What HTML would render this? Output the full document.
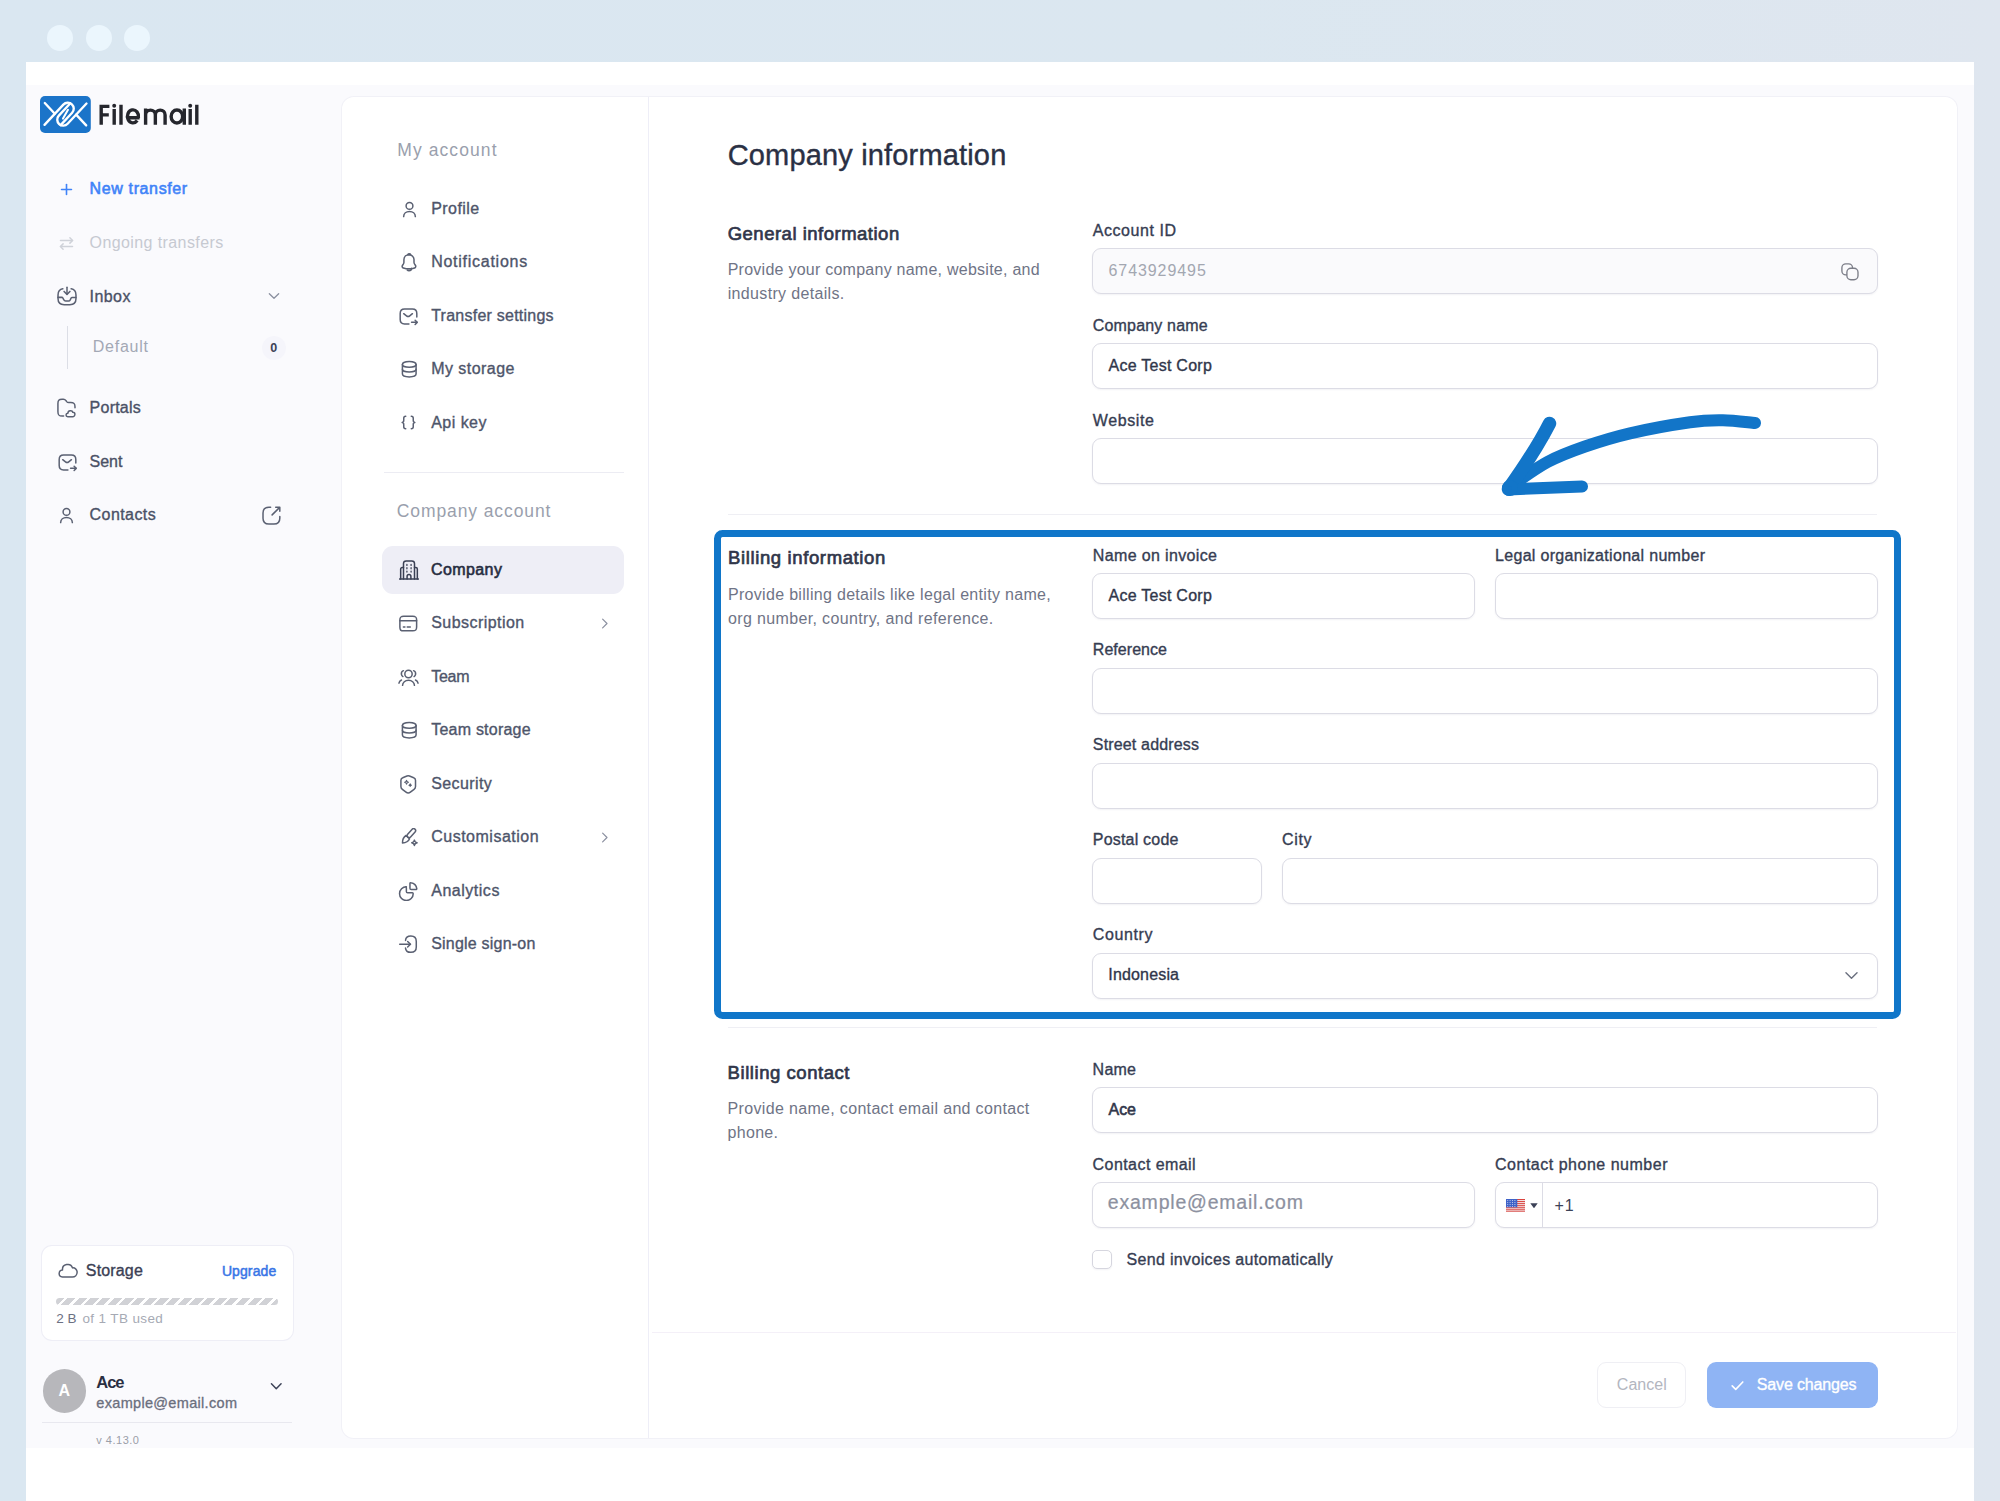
<!DOCTYPE html><html lang="en"><head><meta charset="utf-8"><title>Company information</title><style>

html,body{margin:0;padding:0}
body{width:2000px;height:1501px;background:linear-gradient(90deg,#dae7f1 0%,#dbe7f0 60%,#dfe6ef 100%);position:relative;overflow:hidden;font-family:"Liberation Sans",sans-serif;-webkit-font-smoothing:antialiased}
.b{position:absolute;display:block}
.t{position:absolute;white-space:pre;display:block}

</style></head><body>
<div class="b" style="left:25.5px;top:62.3px;width:1948.0px;height:1438.7px;background:#fff;"></div>
<div class="b" style="left:25.5px;top:84.5px;width:1948.0px;height:1363.5px;background:#fafafd;"></div>
<div class="b" style="left:47px;top:25px;width:26px;height:26px;background:#ebf6fd;border-radius:50%;"></div>
<div class="b" style="left:85.5px;top:25px;width:26.0px;height:26px;background:#ebf6fd;border-radius:50%;"></div>
<div class="b" style="left:124px;top:25px;width:26px;height:26px;background:#ebf6fd;border-radius:50%;"></div>
<div class="b" style="left:342px;top:97px;width:1614.5px;height:1340.8px;background:#fff;border-radius:12px;box-shadow:0 0 0 1px #f1f1f7;"></div>
<div class="b" style="left:648px;top:97px;width:1.3999999999999773px;height:1340.8px;background:#eeeef7;"></div>
<div class="b" style="left:66.8px;top:325.5px;width:1.5px;height:43.5px;background:#dcdee6;"></div>
<div class="b" style="left:262px;top:336px;width:24px;height:24px;background:#f5f5fb;border-radius:50%;"></div>
<div class="b" style="left:42px;top:1246.2px;width:250.60000000000002px;height:94.29999999999995px;background:#fff;border-radius:10px;box-shadow:0 0 0 1px #eeeef6;"></div>
<div class="b" style="left:56px;top:1297.5px;width:221.5px;height:7.0px;border-radius:4px;background:repeating-linear-gradient(135deg,#d1d2d6 0 5.800px,#fff 5.800px 8.240px);"></div>
<div class="b" style="left:42.6px;top:1369.4px;width:43.800000000000004px;height:43.799999999999955px;background:#b7b7bb;border-radius:50%;"></div>
<div class="b" style="left:42px;top:1422px;width:250px;height:1.400000000000091px;background:#e8e8ef;"></div>
<div class="b" style="left:384px;top:472px;width:240px;height:1.1999999999999886px;background:#ececf3;"></div>
<div class="b" style="left:382.4px;top:546px;width:241.80000000000007px;height:48px;background:#eeeef6;border-radius:11px;"></div>
<div class="b" style="left:728px;top:513.5px;width:1149px;height:1.2000000000000455px;background:#efeff4;"></div>
<div class="b" style="left:728px;top:1027px;width:1149px;height:1.2000000000000455px;background:#efeff4;"></div>
<div class="b" style="left:652px;top:1331.6px;width:1304px;height:1.400000000000091px;background:#f4f0f8;"></div>
<div class="b" style="left:1092.3px;top:248.2px;width:785.9000000000001px;height:46.0px;background:#fff;border:1px solid #dcdce5;border-radius:9px;box-shadow:0 1px 2px rgba(40,40,80,.06);box-sizing:border-box;background:#fafafc;"></div>
<div class="b" style="left:1092.3px;top:343px;width:785.9000000000001px;height:46px;background:#fff;border:1px solid #dcdce5;border-radius:9px;box-shadow:0 1px 2px rgba(40,40,80,.06);box-sizing:border-box;"></div>
<div class="b" style="left:1092.3px;top:438px;width:785.9000000000001px;height:46px;background:#fff;border:1px solid #dcdce5;border-radius:9px;box-shadow:0 1px 2px rgba(40,40,80,.06);box-sizing:border-box;"></div>
<div class="b" style="left:1092.3px;top:573px;width:382.5px;height:46px;background:#fff;border:1px solid #dcdce5;border-radius:9px;box-shadow:0 1px 2px rgba(40,40,80,.06);box-sizing:border-box;"></div>
<div class="b" style="left:1494.8px;top:573px;width:383.4000000000001px;height:46px;background:#fff;border:1px solid #dcdce5;border-radius:9px;box-shadow:0 1px 2px rgba(40,40,80,.06);box-sizing:border-box;"></div>
<div class="b" style="left:1092.3px;top:668px;width:785.9000000000001px;height:46px;background:#fff;border:1px solid #dcdce5;border-radius:9px;box-shadow:0 1px 2px rgba(40,40,80,.06);box-sizing:border-box;"></div>
<div class="b" style="left:1092.3px;top:762.8px;width:785.9000000000001px;height:46.0px;background:#fff;border:1px solid #dcdce5;border-radius:9px;box-shadow:0 1px 2px rgba(40,40,80,.06);box-sizing:border-box;"></div>
<div class="b" style="left:1092.3px;top:857.8px;width:169.70000000000005px;height:46.0px;background:#fff;border:1px solid #dcdce5;border-radius:9px;box-shadow:0 1px 2px rgba(40,40,80,.06);box-sizing:border-box;"></div>
<div class="b" style="left:1281.8px;top:857.8px;width:596.4000000000001px;height:46.0px;background:#fff;border:1px solid #dcdce5;border-radius:9px;box-shadow:0 1px 2px rgba(40,40,80,.06);box-sizing:border-box;"></div>
<div class="b" style="left:1092.3px;top:952.6px;width:785.9000000000001px;height:46.0px;background:#fff;border:1px solid #dcdce5;border-radius:9px;box-shadow:0 1px 2px rgba(40,40,80,.06);box-sizing:border-box;"></div>
<div class="b" style="left:1092.3px;top:1087.4px;width:785.9000000000001px;height:45.799999999999955px;background:#fff;border:1px solid #dcdce5;border-radius:9px;box-shadow:0 1px 2px rgba(40,40,80,.06);box-sizing:border-box;"></div>
<div class="b" style="left:1092.3px;top:1182px;width:382.5px;height:46px;background:#fff;border:1px solid #dcdce5;border-radius:9px;box-shadow:0 1px 2px rgba(40,40,80,.06);box-sizing:border-box;"></div>
<div class="b" style="left:1494.8px;top:1182px;width:383.4000000000001px;height:46px;background:#fff;border:1px solid #dcdce5;border-radius:9px;box-shadow:0 1px 2px rgba(40,40,80,.06);box-sizing:border-box;"></div>
<div class="b" style="left:1542px;top:1183px;width:1.2000000000000455px;height:44px;background:#dcdce5;"></div>
<div class="b" style="left:1092.3px;top:1250px;width:19.299999999999955px;height:19.200000000000045px;background:#fff;border:1px solid #dcdce5;border-radius:9px;box-shadow:0 1px 2px rgba(40,40,80,.06);box-sizing:border-box;border-radius:5px;border-color:#d6d6df;"></div>
<div class="b" style="left:1596.6px;top:1362.4px;width:89.60000000000014px;height:45.19999999999982px;background:#fff;border:1px solid #efeff4;border-radius:9px;box-sizing:border-box;"></div>
<div class="b" style="left:1706.6px;top:1362.4px;width:171.0px;height:45.19999999999982px;background:#8fb4f4;border-radius:9px;"></div>
<div class="b" style="left:714px;top:530px;width:1187px;height:489px;border:7px solid #1076c9;border-radius:8.500px;box-sizing:border-box;"></div>
<svg class="b" style="left:40.1px;top:96px" width="50.8" height="36.9" viewBox="0 0 50.8 36.9"><rect width="50.8" height="36.9" rx="5" fill="#1b74c9"/><g stroke="#fff" stroke-width="2.35" stroke-linecap="round" stroke-linejoin="round" fill="none"><path d="M4.800 7L14.830 17.750"/><path d="M46.200 29.400L36.170 18.650"/><path d="M4.500 28.840L23.370 8.610A6 6 0 0 1 32.150 16.790L20.660 29.110"/><path d="M46.500 7.560L27.630 27.790A6 6 0 0 1 18.850 19.610L30.340 7.290"/><path d="M28 13.800L23 22.600" stroke-width="2"/></g></svg>
<svg class="b" role="img" aria-label="Filemail" style="left:0;top:0" width="220" height="140" viewBox="0 0 220 140" fill="none" stroke="#25262d" stroke-width="3.4"><path d="M101.2,124.7V104.7M99.5,106.4H109.4M99.5,114.9H108.8M114.2,124.7V109.10000000000001M121,124.7V104.7M128.3,117.7H139.6M138.4,117.7A5.55,6.5 0 1 0 137.22,120.55M145.6,124.7V108.4M145.6,114.97500000000001A4.875,4.875 0 0 1 155.35,114.97500000000001V124.7M155.35,114.97500000000001A4.875,4.875 0 0 1 165.1,114.97500000000001V124.7M184.3,124.7V108.4M190.2,124.7V109.10000000000001M196.8,124.7V104.7"/><ellipse cx="176.900" cy="116.550" rx="5.750" ry="6.500"/><circle cx="114.200" cy="105.700" r="1.950" fill="#25262d" stroke="none"/><circle cx="190.200" cy="105.700" r="1.950" fill="#25262d" stroke="none"/></svg>
<svg class="b" style="left:58.1px;top:180.9px" width="17" height="17" viewBox="0 0 24 24" fill="none" stroke="#3f83f8" stroke-width="2.26" stroke-linecap="round" stroke-linejoin="round" ><path d="M5 12h14"/><path d="M12 5v14"/></svg>
<svg class="b" style="left:58.3px;top:234.5px" width="17" height="17" viewBox="0 0 24 24" fill="none" stroke="#cfd2d9" stroke-width="2.12" stroke-linecap="round" stroke-linejoin="round" ><path d="M20.500 7.800H3.500"/><path d="M16.800 4l3.700 3.800-3.700 3.700"/><path d="M3.500 16.200h17"/><path d="M7.200 12.500l-3.700 3.700 3.700 3.800"/></svg>
<svg class="b" style="left:56.0px;top:285.2px" width="22" height="22" viewBox="0 0 24 24" fill="none" stroke="#5a6072" stroke-width="1.64" stroke-linecap="round" stroke-linejoin="round" ><path d="M12 2.500v7.200"/><path d="M8.800 7l3.200 3.200L15.200 7"/><path d="M2.200 13.500h4.300c.4 0 .7.200.9.500l1 2c.6 1.200 1.500 1.500 2.100 1.500h3.100c.8 0 1.600-.5 1.900-1.200l1.100-2.200c.2-.3.500-.5.900-.5h4.200"/><path d="M7.500 4.200C4 4.700 2.200 6.800 2.200 11v3.800c0 4.800 1.900 6.700 6.700 6.700h6.200c4.800 0 6.700-1.900 6.700-6.700V11c0-4.200-1.800-6.300-5.300-6.800"/></svg>
<svg class="b" style="left:266.0px;top:288.0px" width="16" height="16" viewBox="0 0 24 24" fill="none" stroke="#8b90a0" stroke-width="1.95" stroke-linecap="round" stroke-linejoin="round" ><path d="M5 8.500l7 7 7-7"/></svg>
<svg class="b" style="left:56.3px;top:397.9px" width="21" height="21" viewBox="0 0 24 24" fill="none" stroke="#5a6072" stroke-width="1.71" stroke-linecap="round" stroke-linejoin="round" ><path d="M21.700 11.200V10c0-3.800-1-4.800-4.800-4.800h-2.400c-1 0-1.700-.3-2.300-1.100l-.7-1c-.7-.9-1.200-1.600-3.100-1.600H7c-3.800 0-4.800 1-4.800 4.800v9.500c0 3.800 1 4.800 4.800 4.800h1.700"/><path d="M13.500 21.300c-2.700-.2-2.700-3.800 0-4h.1c0-3.200 5-3.700 5.600-1 1.100-.1 2.300.7 2.400 2.100.1 1.600-1.200 2.900-2.700 2.900h-5.400z"/></svg>
<svg class="b" style="left:56.5px;top:451.5px" width="21" height="21" viewBox="0 0 24 24" fill="none" stroke="#5a6072" stroke-width="1.71" stroke-linecap="round" stroke-linejoin="round" ><path d="M21.500 12.500V8.500c0-3.500-2-5-5-5h-9c-3 0-5 1.500-5 5v7c0 3.500 2 5 5 5h5"/><path d="M16.500 8.800l-3.100 2.500c-1 .8-2.700.8-3.700 0L6.500 8.800"/><path d="M15.500 18.700h6.300"/><path d="M19.600 16.300l2.300 2.400-2.300 2.400"/></svg>
<svg class="b" style="left:57.3px;top:506.3px" width="19" height="19" viewBox="0 0 24 24" fill="none" stroke="#5a6072" stroke-width="1.89" stroke-linecap="round" stroke-linejoin="round" ><circle cx="12" cy="7.5" r="4.3"/><path d="M4.6 21c0-3.9 3.3-6.4 7.4-6.4s7.4 2.5 7.4 6.4"/></svg>
<svg class="b" style="left:260.7px;top:505.1px" width="21" height="21" viewBox="0 0 24 24" fill="none" stroke="#5a6072" stroke-width="1.71" stroke-linecap="round" stroke-linejoin="round" ><path d="M12.700 11.300l8-8"/><path d="M21.500 7.200V2.500h-4.700"/><path d="M11 2.500H9c-4.800 0-6.700 1.900-6.700 6.700v5.800c0 4.800 1.900 6.700 6.700 6.700h5.800c4.800 0 6.700-1.900 6.700-6.700v-2"/></svg>
<svg class="b" style="left:57.3px;top:1260.3px" width="21" height="21" viewBox="0 0 24 24" fill="none" stroke="#5a6072" stroke-width="1.71" stroke-linecap="round" stroke-linejoin="round" ><path d="M6.200 19.500c-5-.4-5-7.600 0-8h.1C5.500 4.700 15.700 2.500 17.700 9c2.600-.4 5.300 1.600 5.300 5 0 3-2.400 5.500-5.400 5.500H6.200z"/></svg>
<svg class="b" style="left:267.55px;top:1377.55px" width="16.5" height="16.5" viewBox="0 0 24 24" fill="none" stroke="#3c4257" stroke-width="2.18" stroke-linecap="round" stroke-linejoin="round" ><path d="M5 8.500l7 7 7-7"/></svg>
<svg class="b" style="left:399.5px;top:199.5px" width="19" height="19" viewBox="0 0 24 24" fill="none" stroke="#5a6072" stroke-width="1.89" stroke-linecap="round" stroke-linejoin="round" ><circle cx="12" cy="7.5" r="4.3"/><path d="M4.6 21c0-3.9 3.3-6.4 7.4-6.4s7.4 2.5 7.4 6.4"/></svg>
<svg class="b" style="left:398.6px;top:252.4px" width="20" height="20" viewBox="0 0 24 24" fill="none" stroke="#5a6072" stroke-width="1.8" stroke-linecap="round" stroke-linejoin="round" ><path d="M12 3.2c-3.4 0-6.1 2.7-6.1 6.1v2.9c0 .6-.3 1.6-.6 2.1l-1.200 1.900c-.7 1.200-.2 2.500 1.100 2.900 4.400 1.500 9.100 1.500 13.500 0 1.200-.4 1.800-1.800 1.100-2.900l-1.200-1.900c-.3-.5-.6-1.500-.6-2.100V9.300c.1-3.300-2.700-6.100-6-6.100z"/><path d="M13.500 3.400a6 6 0 0 0-3 0c.3-.7 1-1.200 1.800-1.200s1.500.5 1.800 1.200z"/><path d="M15 19.500c0 1.600-1.400 3-3 3-.8 0-1.600-.3-2.100-.9"/></svg>
<svg class="b" style="left:398.3px;top:305.7px" width="21" height="21" viewBox="0 0 24 24" fill="none" stroke="#5a6072" stroke-width="1.71" stroke-linecap="round" stroke-linejoin="round" ><path d="M21.500 12.500V8.500c0-3.500-2-5-5-5h-9c-3 0-5 1.500-5 5v7c0 3.500 2 5 5 5h5"/><path d="M16.500 8.800l-3.100 2.500c-1 .8-2.700.8-3.700 0L6.500 8.800"/><path d="M15.500 18.700h6.300"/><path d="M19.600 16.300l2.300 2.400-2.300 2.400"/></svg>
<svg class="b" style="left:398.55px;top:359.15px" width="20.5" height="20.5" viewBox="0 0 24 24" fill="none" stroke="#5a6072" stroke-width="1.76" stroke-linecap="round" stroke-linejoin="round" ><ellipse cx="12" cy="6.3" rx="8" ry="3.300"/><path d="M4 6.300v11.400c0 1.800 3.600 3.300 8 3.300s8-1.500 8-3.300V6.300"/><path d="M4 12c0 1.800 3.600 3.300 8 3.300s8-1.500 8-3.300"/></svg>
<svg class="b" style="left:399.3px;top:413.3px" width="19" height="19" viewBox="0 0 24 24" fill="none" stroke="#5a6072" stroke-width="1.89" stroke-linecap="round" stroke-linejoin="round" ><path d="M8.500 4C6.500 4 6 5 6 6.500v2.800C6 10.800 5.300 12 4 12c1.300 0 2 1.200 2 2.700v2.800C6 19 6.500 20 8.500 20"/><path d="M15.500 4c2 0 2.500 1 2.500 2.500v2.800c0 1.500.7 2.700 2 2.700-1.300 0-2 1.200-2 2.700v2.800c0 1.500-.5 2.500-2.500 2.500"/></svg>
<svg class="b" style="left:398.6px;top:559.8px" width="20" height="20" viewBox="0 0 24 24" fill="none" stroke="#3a4054" stroke-width="1.8" stroke-linecap="round" stroke-linejoin="round" ><path d="M0.800 22.800h22.400"/><path d="M5.400 22.800V4.300c0-1.900 1.300-3.200 3.200-3.200h6.800c1.900 0 3.200 1.300 3.200 3.200v18.500"/><path d="M5.400 9H3.900c-1.100 0-1.900.8-1.900 1.900v11.900M18.600 9h1.500c1.100 0 1.900.8 1.900 1.900v11.900"/><path d="M9.700 22.800v-3.100c0-1.300 1-2.300 2.300-2.300s2.300 1 2.300 2.300v3.100"/><path d="M9.500 5.200v1.300M9.500 9.200v1.300M9.500 13.200v1.300M14.500 5.200v1.300M14.500 9.200v1.300M14.500 13.200v1.300" stroke-width="1.500"/></svg>
<svg class="b" style="left:398.35px;top:613.35px" width="20.5" height="20.5" viewBox="0 0 24 24" fill="none" stroke="#5a6072" stroke-width="1.76" stroke-linecap="round" stroke-linejoin="round" ><path d="M2.200 9h19.600"/><path d="M6.300 16.500h1.800M10.800 16.500h3.600"/><path d="M6.700 3.800h10.600c3.600 0 4.500.9 4.500 4.400v8.300c0 3.500-.9 4.400-4.500 4.400H6.700c-3.600 0-4.500-.9-4.500-4.400V8.200c0-3.500.9-4.400 4.500-4.400z"/></svg>
<svg class="b" style="left:596.9px;top:615.7px" width="15" height="15" viewBox="0 0 24 24" fill="none" stroke="#8b90a0" stroke-width="1.92" stroke-linecap="round" stroke-linejoin="round" ><path d="M9 5l7 7-7 7"/></svg>
<svg class="b" style="left:398.1px;top:666.5px" width="21" height="21" viewBox="0 0 24 24" fill="none" stroke="#5a6072" stroke-width="1.71" stroke-linecap="round" stroke-linejoin="round" ><circle cx="12" cy="8" r="4.200"/><path d="M5.200 21c0-3.300 3-5.800 6.800-5.800s6.800 2.500 6.800 5.800"/><path d="M17.800 4.200c1.600.7 2.600 2.300 2.300 4.100-.2 1.100-.8 2-1.700 2.600"/><path d="M20 14.800c1.500.7 2.600 2 2.900 3.700"/><path d="M6.200 4.200C4.600 4.900 3.600 6.500 3.900 8.300c.2 1.100.8 2 1.700 2.600"/><path d="M4 14.800c-1.500.7-2.600 2-2.900 3.700"/></svg>
<svg class="b" style="left:398.55px;top:720.35px" width="20.5" height="20.5" viewBox="0 0 24 24" fill="none" stroke="#5a6072" stroke-width="1.76" stroke-linecap="round" stroke-linejoin="round" ><ellipse cx="12" cy="6.3" rx="8" ry="3.300"/><path d="M4 6.300v11.400c0 1.800 3.600 3.300 8 3.300s8-1.500 8-3.300V6.300"/><path d="M4 12c0 1.800 3.600 3.300 8 3.300s8-1.500 8-3.300"/></svg>
<svg class="b" style="left:398.35px;top:773.75px" width="20.5" height="20.5" viewBox="0 0 24 24" fill="none" stroke="#5a6072" stroke-width="1.76" stroke-linecap="round" stroke-linejoin="round" ><path d="M10.500 2.400L5.500 4.300C4.300 4.700 3.400 6.100 3.400 7.300v7.400c0 1.200.8 2.700 1.700 3.400l4.300 3.200c1.400 1.100 3.700 1.100 5.100 0l4.300-3.200c.9-.7 1.700-2.200 1.700-3.400V7.300c0-1.200-.9-2.600-2.100-3l-5-1.900c-.8-.3-2.100-.3-2.900 0z"/><path d="M10 7.300c.2 1.400.9 2.100 2.300 2.300-1.400.2-2.100.9-2.300 2.300-.2-1.400-.9-2.100-2.300-2.300 1.400-.2 2.100-.9 2.300-2.300z" stroke-width="1.300"/><path d="M14.300 11.600c.1.900.6 1.400 1.500 1.500-.9.100-1.400.6-1.500 1.500-.1-.9-.6-1.400-1.500-1.500.9-.1 1.400-.6 1.500-1.500z" stroke-width="1.300"/></svg>
<svg class="b" style="left:398.35px;top:827.55px" width="20.5" height="20.5" viewBox="0 0 24 24" fill="none" stroke="#5a6072" stroke-width="1.76" stroke-linecap="round" stroke-linejoin="round" ><g transform="translate(-1.200 -0.600) rotate(42 12 12)"><rect x="9.700" y="-1.500" width="4.600" height="12.500" rx="2.300"/><path d="M9.200 11h5.600c.9 2.800-.2 6.500-2.800 9.300-2.600-2.800-3.700-6.500-2.800-9.300z"/></g><path d="M19.200 14.200c.3 1.800 1.300 2.800 3.100 3.100-1.800.3-2.800 1.300-3.100 3.100-.3-1.800-1.300-2.800-3.100-3.100 1.800-.3 2.800-1.300 3.100-3.100z"/></svg>
<svg class="b" style="left:596.9px;top:829.7px" width="15" height="15" viewBox="0 0 24 24" fill="none" stroke="#8b90a0" stroke-width="1.92" stroke-linecap="round" stroke-linejoin="round" ><path d="M9 5l7 7-7 7"/></svg>
<svg class="b" style="left:398.35px;top:880.75px" width="20.5" height="20.5" viewBox="0 0 24 24" fill="none" stroke="#5a6072" stroke-width="1.76" stroke-linecap="round" stroke-linejoin="round" ><path d="M10.300 6.200a8 8 0 1 0 8 8c0-.6-.4-1-1-1h-5.500c-.8 0-1.500-.7-1.500-1.500V7.200c0-.6-.4-1-1-1z" transform="translate(-.5 .6)"/><path d="M14 2.800c0-.6.500-1.100 1.100-1 3.600.5 6.400 3.300 6.900 6.900.1.600-.4 1.100-1 1.100h-5.500c-.8 0-1.500-.7-1.500-1.500V2.800z" transform="translate(0 .2)"/></svg>
<svg class="b" style="left:398.35px;top:934.35px" width="20.5" height="20.5" viewBox="0 0 24 24" fill="none" stroke="#5a6072" stroke-width="1.76" stroke-linecap="round" stroke-linejoin="round" ><path d="M2 12h12.500"/><path d="M11.300 8.700l3.300 3.300-3.300 3.300"/><path d="M8.800 7.500c.3-3.600 2.200-5.100 6.200-5.100h.1c4.500 0 6.300 1.800 6.300 6.300v6.500c0 4.500-1.800 6.300-6.300 6.300H15c-4 0-5.900-1.400-6.200-5"/></svg>
<svg class="b" style="left:1840px;top:261.5px" width="20" height="20" viewBox="0 0 20 20" fill="none" stroke="#7c7e88" stroke-width="1.35"><rect x="1.900" y="1.900" width="10.600" height="11" rx="3.900"/><rect x="6.900" y="6.200" width="11.100" height="11.500" rx="4" fill="#fafafc"/></svg>
<svg class="b" style="left:1841.7px;top:966.1px" width="19" height="19" viewBox="0 0 24 24" fill="none" stroke="#6a6f7e" stroke-width="1.77" stroke-linecap="round" stroke-linejoin="round" ><path d="M5 8.500l7 7 7-7"/></svg>
<svg class="b" style="left:1728.7px;top:1376.5px" width="17" height="17" viewBox="0 0 24 24" fill="none" stroke="#ffffff" stroke-width="2.26" stroke-linecap="round" stroke-linejoin="round" ><path d="M4.500 12.500l5 5L19.500 7"/></svg>
<svg class="b" style="left:1505.8px;top:1198.6px" width="19.4" height="13.4" viewBox="0 0 19.4 13.4"><rect width="19.4" height="13.4" fill="#f3e7e7"/><rect y="0.00" width="19.4" height="1.03" fill="#d9433f"/><rect y="2.06" width="19.4" height="1.03" fill="#d9433f"/><rect y="4.12" width="19.4" height="1.03" fill="#d9433f"/><rect y="6.18" width="19.4" height="1.03" fill="#d9433f"/><rect y="8.24" width="19.4" height="1.03" fill="#d9433f"/><rect y="10.30" width="19.4" height="1.03" fill="#d9433f"/><rect y="12.36" width="19.4" height="1.03" fill="#d9433f"/><rect width="11.300" height="8.300" fill="#3f63c8"/><g fill="#b9c4ea"><rect x="1.2" y="1.0" width="1" height="1"/><rect x="3.6" y="1.0" width="1" height="1"/><rect x="6.0" y="1.0" width="1" height="1"/><rect x="8.4" y="1.0" width="1" height="1"/><rect x="1.2" y="3.0" width="1" height="1"/><rect x="3.6" y="3.0" width="1" height="1"/><rect x="6.0" y="3.0" width="1" height="1"/><rect x="8.4" y="3.0" width="1" height="1"/><rect x="1.2" y="5.0" width="1" height="1"/><rect x="3.6" y="5.0" width="1" height="1"/><rect x="6.0" y="5.0" width="1" height="1"/><rect x="8.4" y="5.0" width="1" height="1"/><rect x="1.2" y="7.0" width="1" height="1"/><rect x="3.6" y="7.0" width="1" height="1"/><rect x="6.0" y="7.0" width="1" height="1"/><rect x="8.4" y="7.0" width="1" height="1"/></g></svg><svg class="b" style="left:1529.6px;top:1202.6px" width="8" height="5.600" viewBox="0 0 8 5.600"><path d="M0.300 0.300h7.400L4 5.300z" fill="#3c4257"/></svg>
<span class="t" style="left:89.6px;top:178.98px;font-size:16px;line-height:19.2px;font-weight:400;color:#3f83f8;-webkit-text-stroke:0.58px #3f83f8;letter-spacing:0.627px">New transfer</span>
<span class="t" style="left:89.6px;top:232.58px;font-size:16px;line-height:19.2px;font-weight:400;color:#c6c9d1;letter-spacing:0.401px">Ongoing transfers</span>
<span class="t" style="left:89.6px;top:286.58px;font-size:16px;line-height:19.2px;font-weight:400;color:#4a5166;-webkit-text-stroke:0.35px #4a5166;letter-spacing:0.415px">Inbox</span>
<span class="t" style="left:92.8px;top:336.98px;font-size:16px;line-height:19.2px;font-weight:400;color:#a3a8b5;letter-spacing:0.749px">Default</span>
<span class="t" style="left:270.2px;top:340.84px;font-size:12.5px;line-height:15.0px;font-weight:700;color:#3c4257;letter-spacing:0.847px">0</span>
<span class="t" style="left:89.6px;top:397.78px;font-size:16px;line-height:19.2px;font-weight:400;color:#4a5166;-webkit-text-stroke:0.35px #4a5166;letter-spacing:0.234px">Portals</span>
<span class="t" style="left:89.6px;top:451.98px;font-size:16px;line-height:19.2px;font-weight:400;color:#4a5166;-webkit-text-stroke:0.35px #4a5166;letter-spacing:-0.041px">Sent</span>
<span class="t" style="left:89.6px;top:505.18px;font-size:16px;line-height:19.2px;font-weight:400;color:#4a5166;-webkit-text-stroke:0.35px #4a5166;letter-spacing:0.423px">Contacts</span>
<span class="t" style="left:85.8px;top:1261.08px;font-size:16px;line-height:19.2px;font-weight:400;color:#3a4054;-webkit-text-stroke:0.35px #3a4054;letter-spacing:0.159px">Storage</span>
<span class="t" style="left:221.9px;top:1262.76px;font-size:14px;line-height:16.8px;font-weight:400;color:#3875e6;-webkit-text-stroke:0.5px #3875e6;letter-spacing:0.099px">Upgrade</span>
<span class="t" style="left:56.3px;top:1311.46px;font-size:13.5px;line-height:16.2px;font-weight:400;color:#6b7082;letter-spacing:-0.033px">2 B</span>
<span class="t" style="left:82.5px;top:1311.46px;font-size:13.5px;line-height:16.2px;font-weight:400;color:#a6aab4;letter-spacing:0.363px">of 1 TB used</span>
<span class="t" style="left:58.6px;top:1381.18px;font-size:16px;line-height:19.2px;font-weight:700;color:#ffffff;letter-spacing:-0.163px">A</span>
<span class="t" style="left:96.3px;top:1373.29px;font-size:16.5px;line-height:19.8px;font-weight:700;color:#2a2f42;letter-spacing:-1.041px">Ace</span>
<span class="t" style="left:96.3px;top:1394.87px;font-size:14.5px;line-height:17.4px;font-weight:400;color:#6b6f7d;-webkit-text-stroke:0.32px #6b6f7d;letter-spacing:0.318px">example@email.com</span>
<span class="t" style="left:96.3px;top:1433.73px;font-size:11px;line-height:13.2px;font-weight:400;color:#9a9ea8;letter-spacing:0.508px">v 4.13.0</span>
<span class="t" style="left:397.3px;top:139.9px;font-size:17.5px;line-height:21.0px;font-weight:400;color:#9a9fad;letter-spacing:1.08px">My account</span>
<span class="t" style="left:431.2px;top:198.58px;font-size:16px;line-height:19.2px;font-weight:400;color:#4e556a;-webkit-text-stroke:0.35px #4e556a;letter-spacing:0.44px">Profile</span>
<span class="t" style="left:431.2px;top:251.98px;font-size:16px;line-height:19.2px;font-weight:400;color:#4e556a;-webkit-text-stroke:0.35px #4e556a;letter-spacing:0.737px">Notifications</span>
<span class="t" style="left:431.2px;top:305.58px;font-size:16px;line-height:19.2px;font-weight:400;color:#4e556a;-webkit-text-stroke:0.35px #4e556a;letter-spacing:0.24px">Transfer settings</span>
<span class="t" style="left:431.2px;top:359.18px;font-size:16px;line-height:19.2px;font-weight:400;color:#4e556a;-webkit-text-stroke:0.35px #4e556a;letter-spacing:0.462px">My storage</span>
<span class="t" style="left:431.2px;top:412.78px;font-size:16px;line-height:19.2px;font-weight:400;color:#4e556a;-webkit-text-stroke:0.35px #4e556a;letter-spacing:0.472px">Api key</span>
<span class="t" style="left:396.8px;top:501.1px;font-size:17.5px;line-height:21.0px;font-weight:400;color:#9a9fad;letter-spacing:0.896px">Company account</span>
<span class="t" style="left:431px;top:559.98px;font-size:16px;line-height:19.2px;font-weight:400;color:#262c40;-webkit-text-stroke:0.58px #262c40;letter-spacing:0.403px">Company</span>
<span class="t" style="left:431.2px;top:613.38px;font-size:16px;line-height:19.2px;font-weight:400;color:#4e556a;-webkit-text-stroke:0.35px #4e556a;letter-spacing:0.45px">Subscription</span>
<span class="t" style="left:431.2px;top:666.88px;font-size:16px;line-height:19.2px;font-weight:400;color:#4e556a;-webkit-text-stroke:0.35px #4e556a;letter-spacing:-0.275px">Team</span>
<span class="t" style="left:431.2px;top:720.38px;font-size:16px;line-height:19.2px;font-weight:400;color:#4e556a;-webkit-text-stroke:0.35px #4e556a;letter-spacing:0.224px">Team storage</span>
<span class="t" style="left:431.2px;top:773.78px;font-size:16px;line-height:19.2px;font-weight:400;color:#4e556a;-webkit-text-stroke:0.35px #4e556a;letter-spacing:0.4px">Security</span>
<span class="t" style="left:431.2px;top:827.18px;font-size:16px;line-height:19.2px;font-weight:400;color:#4e556a;-webkit-text-stroke:0.35px #4e556a;letter-spacing:0.502px">Customisation</span>
<span class="t" style="left:431.2px;top:880.78px;font-size:16px;line-height:19.2px;font-weight:400;color:#4e556a;-webkit-text-stroke:0.35px #4e556a;letter-spacing:0.521px">Analytics</span>
<span class="t" style="left:431.2px;top:934.38px;font-size:16px;line-height:19.2px;font-weight:400;color:#4e556a;-webkit-text-stroke:0.35px #4e556a;letter-spacing:0.207px">Single sign-on</span>
<span class="t" style="left:727.7px;top:138.23px;font-size:29px;line-height:34.8px;font-weight:400;color:#2a3044;-webkit-text-stroke:0.38px #2a3044;letter-spacing:0.164px">Company information</span>
<span class="t" style="left:727.7px;top:222.51px;font-size:18.5px;line-height:22.2px;font-weight:400;color:#30364a;-webkit-text-stroke:0.67px #30364a;letter-spacing:0.501px">General information</span>
<span class="t" style="left:727.7px;top:259.58px;font-size:16px;line-height:19.2px;font-weight:400;color:#6f7486;letter-spacing:0.25px">Provide your company name, website, and</span>
<span class="t" style="left:727.7px;top:283.98px;font-size:16px;line-height:19.2px;font-weight:400;color:#6f7486;letter-spacing:0.339px">industry details.</span>
<span class="t" style="left:1092.8px;top:220.58px;font-size:16px;line-height:19.2px;font-weight:400;color:#363d52;-webkit-text-stroke:0.35px #363d52;letter-spacing:0.548px">Account ID</span>
<span class="t" style="left:1108.5px;top:260.78px;font-size:16px;line-height:19.2px;font-weight:400;color:#a3a7b1;letter-spacing:0.924px">6743929495</span>
<span class="t" style="left:1092.8px;top:315.78px;font-size:16px;line-height:19.2px;font-weight:400;color:#363d52;-webkit-text-stroke:0.35px #363d52;letter-spacing:0.168px">Company name</span>
<span class="t" style="left:1108.5px;top:355.98px;font-size:16px;line-height:19.2px;font-weight:400;color:#30364a;-webkit-text-stroke:0.35px #30364a;letter-spacing:0.258px">Ace Test Corp</span>
<span class="t" style="left:1092.8px;top:410.58px;font-size:16px;line-height:19.2px;font-weight:400;color:#363d52;-webkit-text-stroke:0.35px #363d52;letter-spacing:0.614px">Website</span>
<span class="t" style="left:728px;top:547.31px;font-size:18.5px;line-height:22.2px;font-weight:400;color:#30364a;-webkit-text-stroke:0.67px #30364a;letter-spacing:0.627px">Billing information</span>
<span class="t" style="left:728px;top:584.78px;font-size:16px;line-height:19.2px;font-weight:400;color:#6f7486;letter-spacing:0.306px">Provide billing details like legal entity name,</span>
<span class="t" style="left:728px;top:608.78px;font-size:16px;line-height:19.2px;font-weight:400;color:#6f7486;letter-spacing:0.353px">org number, country, and reference.</span>
<span class="t" style="left:1092.8px;top:545.58px;font-size:16px;line-height:19.2px;font-weight:400;color:#363d52;-webkit-text-stroke:0.35px #363d52;letter-spacing:0.359px">Name on invoice</span>
<span class="t" style="left:1495px;top:545.58px;font-size:16px;line-height:19.2px;font-weight:400;color:#363d52;-webkit-text-stroke:0.35px #363d52;letter-spacing:0.311px">Legal organizational number</span>
<span class="t" style="left:1108.5px;top:585.88px;font-size:16px;line-height:19.2px;font-weight:400;color:#30364a;-webkit-text-stroke:0.35px #30364a;letter-spacing:0.258px">Ace Test Corp</span>
<span class="t" style="left:1092.8px;top:640.18px;font-size:16px;line-height:19.2px;font-weight:400;color:#363d52;-webkit-text-stroke:0.35px #363d52;letter-spacing:0.046px">Reference</span>
<span class="t" style="left:1092.8px;top:735.18px;font-size:16px;line-height:19.2px;font-weight:400;color:#363d52;-webkit-text-stroke:0.35px #363d52;letter-spacing:0.164px">Street address</span>
<span class="t" style="left:1092.8px;top:829.98px;font-size:16px;line-height:19.2px;font-weight:400;color:#363d52;-webkit-text-stroke:0.35px #363d52;letter-spacing:0.199px">Postal code</span>
<span class="t" style="left:1282px;top:829.98px;font-size:16px;line-height:19.2px;font-weight:400;color:#363d52;-webkit-text-stroke:0.35px #363d52;letter-spacing:0.646px">City</span>
<span class="t" style="left:1092.8px;top:924.78px;font-size:16px;line-height:19.2px;font-weight:400;color:#363d52;-webkit-text-stroke:0.35px #363d52;letter-spacing:0.611px">Country</span>
<span class="t" style="left:1108.3px;top:964.58px;font-size:16px;line-height:19.2px;font-weight:400;color:#30364a;-webkit-text-stroke:0.35px #30364a;letter-spacing:0.164px">Indonesia</span>
<span class="t" style="left:727.6px;top:1061.71px;font-size:18.5px;line-height:22.2px;font-weight:400;color:#30364a;-webkit-text-stroke:0.67px #30364a;letter-spacing:0.553px">Billing contact</span>
<span class="t" style="left:727.6px;top:1098.98px;font-size:16px;line-height:19.2px;font-weight:400;color:#6f7486;letter-spacing:0.33px">Provide name, contact email and contact</span>
<span class="t" style="left:727.6px;top:1123.38px;font-size:16px;line-height:19.2px;font-weight:400;color:#6f7486;letter-spacing:0.292px">phone.</span>
<span class="t" style="left:1092.6px;top:1059.98px;font-size:16px;line-height:19.2px;font-weight:400;color:#363d52;-webkit-text-stroke:0.35px #363d52;letter-spacing:0.238px">Name</span>
<span class="t" style="left:1108.5px;top:1099.58px;font-size:16px;line-height:19.2px;font-weight:400;color:#30364a;-webkit-text-stroke:0.58px #30364a;letter-spacing:-0.039px">Ace</span>
<span class="t" style="left:1092.6px;top:1154.58px;font-size:16px;line-height:19.2px;font-weight:400;color:#363d52;-webkit-text-stroke:0.35px #363d52;letter-spacing:0.431px">Contact email</span>
<span class="t" style="left:1107.8px;top:1190.72px;font-size:19.5px;line-height:23.4px;font-weight:400;color:#8d91a0;-webkit-text-stroke:0.23px #8d91a0;letter-spacing:0.796px">example@email.com</span>
<span class="t" style="left:1495px;top:1154.58px;font-size:16px;line-height:19.2px;font-weight:400;color:#363d52;-webkit-text-stroke:0.35px #363d52;letter-spacing:0.512px">Contact phone number</span>
<span class="t" style="left:1554.5px;top:1195.78px;font-size:16px;line-height:19.2px;font-weight:400;color:#3c4257;letter-spacing:0.95px">+1</span>
<span class="t" style="left:1126.4px;top:1249.58px;font-size:16px;line-height:19.2px;font-weight:400;color:#363d52;-webkit-text-stroke:0.35px #363d52;letter-spacing:0.345px">Send invoices automatically</span>
<span class="t" style="left:1616.8px;top:1374.78px;font-size:16px;line-height:19.2px;font-weight:400;color:#b3b6bf;letter-spacing:0.037px">Cancel</span>
<span class="t" style="left:1756.8px;top:1374.78px;font-size:16px;line-height:19.2px;font-weight:400;color:#ffffff;-webkit-text-stroke:0.35px #ffffff;letter-spacing:-0.155px">Save changes</span>
<svg class="b" style="left:0;top:0" width="2000" height="1501" viewBox="0 0 2000 1501" fill="none" stroke="#1275c8" stroke-linecap="round" stroke-linejoin="round"><path d="M1755,423 C1749.7,422.6 1733.8,420.4 1723,420.3 C1712.2,420.2 1705.5,420.0 1690,422.2 C1674.5,424.4 1647.5,429.2 1630,433.3 C1612.5,437.4 1598.8,441.7 1585,446.5 C1571.2,451.3 1560.3,455.1 1547.5,462 C1534.7,468.9 1514.6,483.7 1508,488" stroke-width="12"/><path d="M1549.500,423.500 C1538,446 1522,470 1508.500,489" stroke-width="13.500"/><path d="M1508.500,489.500 C1535,488.500 1560,487.500 1582,486.500" stroke-width="12"/><circle cx="1510" cy="488" r="5" fill="#1275c8" stroke-width="6"/></svg>
</body></html>
